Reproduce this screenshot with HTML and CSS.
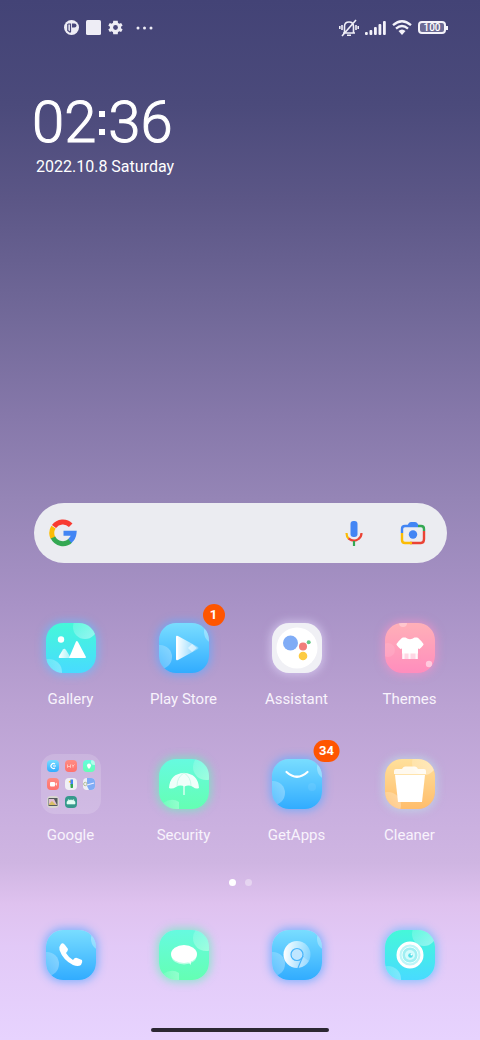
FILE: index.html
```html
<!DOCTYPE html>
<html lang="en">
<head>
<meta charset="utf-8">
<meta name="viewport" content="width=device-width, initial-scale=1">
<title>Home screen</title>
<link rel="stylesheet" href="styles.css">
</head>
<body>
<svg class="defs" aria-hidden="true">
  <defs>
    <linearGradient id="fade" x1="0" x2="1" y1="0" y2="0"><stop offset="0" stop-color="#fff"/><stop offset="1" stop-color="#fff" stop-opacity=".25"/></linearGradient>
    <linearGradient id="bubble" x1="0" x2="1" y1="0" y2="1"><stop offset="0" stop-color="#fff" stop-opacity=".1"/><stop offset="1" stop-color="#fff" stop-opacity=".45"/></linearGradient>
    <linearGradient id="bubbleUp" x1="0" x2="1" y1="0" y2="0"><stop offset="0" stop-color="#fff" stop-opacity=".1"/><stop offset="1" stop-color="#fff" stop-opacity=".3"/></linearGradient>
    <linearGradient id="peak" x1="0" x2="1" y1="0" y2="0"><stop offset="0" stop-color="#fff"/><stop offset="1" stop-color="#fff" stop-opacity=".5"/></linearGradient>
    <symbol id="bg-blue" viewBox="0 0 50 50"><circle cx="1" cy="34" r="12" fill="url(#bubbleUp)"/><circle cx="57" cy="9" r="12" fill="#fff" opacity=".3"/></symbol>
    <symbol id="bg-cyan" viewBox="0 0 50 50"><circle cx="39" cy="4" r="12" fill="url(#bubble)"/><circle cx="3" cy="49" r="13" fill="url(#bubbleUp)"/></symbol>
    <symbol id="bg-green" viewBox="0 0 50 50"><circle cx="47" cy="8" r="13" fill="url(#bubble)"/><path d="M4 44Q13 38 20 43V50H4z" fill="url(#bubbleUp)"/></symbol>
  </defs>
</svg>

<header class="status">
  <div class="status-group">
    <svg width="15" height="15" viewBox="0 0 15 15"><circle cx="7.500" cy="7.500" r="7.500" fill="#eeedf5"/><path d="M3.800 4H6.500V12" fill="none" stroke="#48477b" stroke-width="1.200"/><path d="M3.800 4V10.500L6.500 12.500" fill="none" stroke="#48477b" stroke-width="1.200"/><path d="M8 3.500H10.500A2 2 0 0 1 10.500 7.500H8z" fill="#48477b"/></svg>
    <svg width="15" height="15" viewBox="0 0 15 15"><rect width="15" height="15" rx="1.500" fill="#eeedf5"/></svg>
    <svg width="15" height="15" viewBox="2 2 20 20"><path fill="#eeedf5" d="M19.400 13a7.500 7.500 0 0 0 0-2l2.100-1.600-2-3.500-2.500 1a7.500 7.500 0 0 0-1.700-1L15 3h-6l-.4 2.900a7.500 7.500 0 0 0-1.700 1l-2.500-1-2 3.500L4.600 11a7.500 7.500 0 0 0 0 2l-2.200 1.600 2 3.500 2.500-1a7.500 7.500 0 0 0 1.700 1L9 21h6l.3-2.900a7.500 7.500 0 0 0 1.700-1l2.500 1 2-3.500z"/><circle cx="12" cy="12" r="3.200" fill="#48477b"/></svg>
    <svg class="more" width="17" height="4" viewBox="0 0 17 4" fill="#eeedf5"><circle cx="2" cy="2" r="1.500"/><circle cx="8.500" cy="2" r="1.500"/><circle cx="15" cy="2" r="1.500"/></svg>
  </div>
  <div class="status-group status-right">
    <svg width="20" height="18" viewBox="0 0 20 18" fill="none" stroke="#f0eff7" stroke-width="1.600"><path d="M4 14H16M5.500 13.500V7.500Q5.500 3 10 3T14.500 7.500V13.500M8 16.200H12M3 17L17 1M3 6V11M.8 7V10M17 6V11M19.200 7V10"/></svg>
    <svg width="21" height="14" viewBox="0 0 21 14" fill="#f4f3fa"><rect y="11" width="2.800" height="3" rx="1"/><rect x="4.500" y="9" width="2.800" height="5" rx="1"/><rect x="9" y="6" width="2.800" height="8" rx="1"/><rect x="13.500" y="3" width="2.800" height="11" rx="1"/><rect x="18" width="2.800" height="14" rx="1"/></svg>
    <svg width="20" height="15" viewBox="0 0 20 15" fill="none" stroke="#f4f3fa" stroke-width="2.300"><path d="M1 5.200Q10-2.600 19 5.200M4 8.700Q10 3.300 16 8.700"/><path d="M6.500 11Q10 7.800 13.500 11L10 15z" fill="#f4f3fa" stroke="none"/></svg>
    <div class="battery"><span>100</span></div>
  </div>
</header>

<main class="home">
  <section class="clock">
    <time class="time" datetime="02:36">02<span class="colon"></span>36</time>
    <p class="date">2022.10.8 Saturday</p>
  </section>

  <form class="search">
    <svg width="28" height="28" viewBox="0 0 28 28" fill="none" stroke-width="5"><path d="M5 7.500A11 11 0 0 1 21.700 6.200" stroke="#f83b32"/><path d="M4 19A11 11 0 0 1 4.500 8.200" stroke="#fbbc05"/><path d="M21.500 21.600A11 11 0 0 1 4 18.500" stroke="#34a853"/><path d="M14.500 14.300H25A11 11 0 0 1 20.800 22" stroke="#4285f4"/></svg>
    <input type="search" aria-label="Search">
    <button type="button" aria-label="Voice search"><svg width="18" height="26" viewBox="0 0 18 26" fill="none" stroke-width="2.200"><rect x="5.500" y="1" width="7" height="16" rx="3" fill="#4285f4"/><path d="M1.500 13Q1.500 16.500 3.700 18.800" stroke="#fbbc05"/><path d="M3.500 18.500Q9 22.500 13.500 19Q16.500 17 16.500 13" stroke="#ea4335"/><path d="M9 21V26" stroke="#34a853"/></svg></button>
    <button type="button" aria-label="Search with camera"><svg width="26" height="24" viewBox="0 0 26 24" fill="none" stroke-width="2.400"><path d="M2 12V8Q2 5 5 5H18" stroke="#4285f4"/><path d="M6 5Q8 4.500 8.500 2.500Q9 1 11 1H15Q17 1 17.500 2.500Q18 4 20 5z" fill="#4285f4"/><path d="M18 5H21Q24 5 24 8V10" stroke="#34a853"/><path d="M24 10V18Q24 22 21 22H10" stroke="#ea4335"/><path d="M2 12V19Q2 22 5 22H12" stroke="#fbbc05"/><circle cx="13" cy="13.500" r="4.200" fill="#4285f4"/></svg></button>
  </form>

  <nav class="apps" aria-label="Apps">
    <button class="app"><span class="slot"><span class="tile cyan"><svg viewBox="0 0 50 50"><use href="#bg-cyan"/><circle cx="15" cy="16.500" r="3.200" fill="#fff"/><path d="M23 35L30 18.500Q31 17.500 32 19L40 34Q40 35 39 35z" fill="#fff"/><path d="M13.500 35Q12 35 13 33L17 26.500Q18.500 25 20 27L25 35z" fill="url(#peak)"/></svg></span></span><span class="label">Gallery</span></button>
    <button class="app"><span class="slot"><span class="tile blue"><svg viewBox="0 0 50 50"><use href="#bg-blue"/><path d="M17 14Q17 12 19 13L39 24Q40 25 39 26L19 37Q17 38 17 36z" fill="url(#fade)"/><path d="M17 14V36L19 36V13z" fill="#fff"/><path d="M29 25L33 21L38 25L33 29z" fill="#fff" opacity=".55"/></svg></span><span class="badge">1</span></span><span class="label">Play Store</span></button>
    <button class="app"><span class="slot"><span class="tile white"><svg viewBox="0 0 50 50"><circle cx="25" cy="25" r="20.500" fill="#fff"/><circle cx="18.500" cy="20" r="7.500" fill="#80acf6"/><circle cx="31" cy="23.500" r="4" fill="#f17e7a"/><circle cx="31" cy="33" r="4.300" fill="#fdcb43"/><circle cx="36.700" cy="19.300" r="2" fill="#67c889"/></svg></span></span><span class="label">Assistant</span></button>
    <button class="app"><span class="slot"><span class="tile pink"><svg viewBox="0 0 50 50"><circle cx="18" cy="0" r="4" fill="#fff" opacity=".3"/><circle cx="3" cy="27" r="7" fill="#fff" opacity=".1"/><circle cx="44" cy="41" r="3.200" fill="#fff" opacity=".5"/><path d="M18 14.500H20.500Q25 18 29.500 14.500H32Q34 15 38.500 21Q39 22 34.500 26L33 25.500V30.500H17V25.500L15.500 26Q11 22 11.500 21Q16 15 18 14.500z" fill="#fff"/><path d="M17 29.500H33V36H17z" fill="#fff" opacity=".6"/><path d="M18.500 30V36M24.500 30V36M31.500 30V36" stroke="#fff" stroke-width="2" opacity=".8"/></svg></span></span><span class="label">Themes</span></button>

    <button class="app"><span class="slot folder">
      <svg class="mini blue" viewBox="0 0 12 12"><path d="M8 4A2.500 2.500 0 1 0 8 8M6 6H9" fill="none" stroke="#fff" stroke-width="1.200"/></svg>
      <svg class="mini red" viewBox="0 0 12 12"><path d="M2.500 4.500V7.500L4 6L5.500 7.500V4.500M7 4.500L8 6L9.500 4.500M8 6V7.500" fill="none" stroke="#ffd5cd" stroke-width=".8"/></svg>
      <svg class="mini green" viewBox="0 0 12 12"><path d="M4 5.500A2 2 0 0 1 8 5.500Q8 7 6 9Q4 7 4 5.500" fill="#fff"/><circle cx="11" cy="2" r="3" fill="#fff" opacity=".5"/></svg>
      <svg class="mini red" viewBox="0 0 12 12"><rect x="3" y="4" width="5" height="4.500" rx="1" fill="#fff"/><path d="M8 6L10 4.500V8z" fill="#ffe0da"/></svg>
      <svg class="mini white" viewBox="0 0 12 12"><path d="M3.500 4L6 2V5z" fill="#fbbc05"/><path d="M5.500 1.500H8V7H5.500z" fill="#4285f4"/><path d="M5.500 6H8V9.500Q7 10.500 5.500 9.500z" fill="#34a853"/></svg>
      <svg class="mini white" viewBox="0 0 12 12"><path d="M4 0H12V12H6L4 8z" fill="#7facf5"/><circle cx="2.300" cy="6" r="1.700" fill="none" stroke="#b4bf9c"/><path d="M4 7L11 5" stroke="#eef" stroke-width="1.200"/></svg>
      <svg class="mini silver" viewBox="0 0 12 12"><rect x="1.500" y="2" width="9" height="8" fill="#555b5d"/><path d="M2 3H7L10 9H2z" fill="#e1bed4"/><path d="M2 8L5 5L9 9H2z" fill="#d8bf65"/></svg>
      <svg class="mini teal" viewBox="0 0 12 12"><path d="M2 6Q2 4 6 4T10 6V8H2zM3 3L4.500 5M9 3L7.500 5" fill="#e0fff4" stroke="#e0fff4" stroke-width=".6"/></svg>
    </span><span class="label">Google</span></button>
    <button class="app"><span class="slot"><span class="tile green"><svg viewBox="0 0 50 50"><use href="#bg-green"/><path d="M10 29Q11 14.500 25 14Q39 14.500 40 29Q37 30.500 34 28Q30 25.500 25.500 27.500Q21 25.500 17 28Q13 30.500 10 29z" fill="#fff" opacity=".9"/><path d="M18 27Q18 18 25 14Q32 18 32 27" fill="none" stroke="#c9f9ea" stroke-width="1"/><path d="M25 27V36" stroke="#fff" stroke-width="1.400" opacity=".8"/></svg></span></span><span class="label">Security</span></button>
    <button class="app"><span class="slot"><span class="tile blue"><svg viewBox="0 0 50 50"><use href="#bg-blue"/><circle cx="40" cy="28" r="4" fill="#fff" opacity=".08"/><path d="M14.500 13Q25 22.500 35.500 13" fill="none" stroke="#fff" stroke-width="2.200" stroke-linecap="round"/></svg></span><span class="badge">34</span></span><span class="label">GetApps</span></button>
    <button class="app"><span class="slot"><span class="tile gold"><svg viewBox="0 0 50 50"><circle cx="39" cy="4" r="12" fill="url(#bubble)"/><circle cx="3" cy="46" r="13" fill="url(#bubbleUp)"/><path d="M10 16H40L37 43H13z" fill="#fff"/><path d="M9 15V12Q9 10 11 10H17Q18 7.500 20 7.500H30Q32 7.500 33 10H39Q41 10 41 12V15z" fill="#fff" opacity=".85"/><path d="M10 15.500H40" stroke="#ffe4ad" stroke-width="1"/></svg></span></span><span class="label">Cleaner</span></button>
  </nav>

  <div class="pages" aria-label="Page 1 of 2"><span class="dot current"></span><span class="dot"></span></div>

  <nav class="apps" aria-label="Dock">
    <button class="app" aria-label="Phone"><span class="slot"><span class="tile blue"><svg viewBox="0 0 50 50"><use href="#bg-blue"/><path d="M15 14Q17 12 19 15L22 19Q22 21 20 23Q23 28 27 30Q29 27 31 28L36 30Q37 32 35 35Q32 37 27 35Q17 30 13.500 20Q13 16 15 14z" fill="#fff"/></svg></span></span></button>
    <button class="app" aria-label="Messages"><span class="slot"><span class="tile green"><svg viewBox="0 0 50 50"><use href="#bg-green"/><ellipse cx="25" cy="26" rx="12.500" ry="8.500" fill="#fff" opacity=".55"/><path d="M29 32L32 35V31z" fill="#fff" opacity=".7"/><ellipse cx="25" cy="24" rx="13" ry="9" fill="#fff"/></svg></span></span></button>
    <button class="app" aria-label="Browser"><span class="slot"><span class="tile blue"><svg viewBox="0 0 50 50"><use href="#bg-blue"/><circle cx="25" cy="24.500" r="13.500" fill="url(#fade)"/><circle cx="25" cy="24.500" r="6" fill="#bfe6ff" stroke="#48b5fb" stroke-width="1.200"/><path d="M31 26L26 38" stroke="#48b5fb" stroke-width="1.200"/><path d="M31 27L27 37Q34 37 37 31z" fill="#fff" opacity=".2"/></svg></span></span></button>
    <button class="app" aria-label="Camera"><span class="slot"><span class="tile cyan"><svg viewBox="0 0 50 50"><use href="#bg-cyan"/><circle cx="25" cy="25" r="12" fill="#bdf5f7" stroke="#fff" stroke-width="3"/><circle cx="25" cy="25" r="8" fill="#a0eff2" stroke="#e8ffff" stroke-width="1"/><circle cx="25" cy="25" r="5" fill="#d4fbfc"/><circle cx="25.500" cy="25.500" r="2.300" fill="#55dfe9"/><circle cx="26.500" cy="24.500" r="1" fill="#fff"/></svg></span></span></button>
  </nav>
</main>
<div class="home-bar"></div>
</body>
</html>
```
FILE: styles.css
```css
* { box-sizing: border-box; }

body {
  margin: 0;
  min-height: 100vh;
  display: flex;
  flex-direction: column;
  padding-bottom: 8px;
  font-family: Roboto, "Liberation Sans", sans-serif;
  color: #fff;
  background: linear-gradient(#434376 0%, #4b4a7b 10%, #5b5686 19%, #736a9a 31%, #8678aa 40%, #9585b6 48%, #a892c6 58%, #bba2d3 68%, #c9afdf 78%, #cfb5e2 83%, #dfc2ef 87%, #e2c9f7 91%, #e7d3fe 100%);
}

button { border: 0; padding: 0; background: none; color: inherit; font: inherit; }
svg { display: block; flex: none; }
.defs { position: absolute; width: 0; height: 0; }

.status {
  height: 55px;
  padding: 0 31px 0 64px;
  display: flex;
  align-items: center;
  justify-content: space-between;
}
.status-group { display: flex; align-items: center; gap: 7px; }
.status-right { gap: 6px; }
.more { margin-left: 6px; }
.battery {
  position: relative;
  width: 28px;
  height: 13px;
  margin-right: 3px;
  border: 2px solid #f4f3fa;
  border-radius: 4px;
  background: #6b6a94;
  font-size: 10px;
  font-weight: 500;
  line-height: 9px;
  text-align: center;
}
.battery::after {
  content: "";
  position: absolute;
  right: -4px;
  top: 3px;
  width: 2px;
  height: 4px;
  background: #f4f3fa;
}

.home { flex: 1; display: flex; flex-direction: column; }

.clock { padding: 37px 32px 0; margin-bottom: auto; }
.time {
  display: flex;
  align-items: center;
  font-size: 58px;
  font-weight: 300;
  line-height: 61px;
  -webkit-text-stroke: 1px #fff;
}
.colon {
  width: 6px;
  height: 24px;
  margin: 0 3px;
  border: solid #fff;
  border-width: 6px 0;
}
.date { margin: 4px 4px 0; font-size: 16px; line-height: 20px; }

.search {
  height: 60px;
  margin: 0 33px 55px 34px;
  padding: 0 21px 0 15px;
  display: flex;
  align-items: center;
  border-radius: 30px;
  background: #ebecf1;
}
.search input {
  flex: 1;
  min-width: 0;
  height: 40px;
  padding: 0 12px;
  border: 0;
  outline: 0;
  background: none;
  font: inherit;
}
.search button + button { margin-left: 37px; }

.apps {
  display: grid;
  grid-template-columns: repeat(4, 1fr);
  row-gap: 45px;
  padding: 0 14px;
}
.app { display: flex; flex-direction: column; align-items: center; gap: 11px; }
.slot {
  position: relative;
  width: 60px;
  height: 60px;
  display: grid;
  place-items: center;
}
.label { font-size: 15px; line-height: 20px; color: #f8f3fc; }

.tile {
  width: 50px;
  height: 50px;
  overflow: hidden;
  border-radius: 17px;
}
.blue { background: linear-gradient(#79ddff, #31acff); }
.cyan { background: linear-gradient(#45f8d9, #48dbff); }
.green { background: linear-gradient(#66fae0, #64ffb3); }
.white { background: #f0f0f5; }
.pink { background: linear-gradient(#ffb0b8, #ff8dbd); }
.gold { background: linear-gradient(#ffe09b, #ffbd6c); }
.red { background: linear-gradient(#ff8c83, #ff716d); }
.silver { background: #d9d6d2; }
.teal { background: #36998c; }
.tile.blue { box-shadow: 0 0 8px 2px #61aaffc0; }
.tile.cyan { box-shadow: 0 0 8px 2px #61bdffb0; }
.tile.green { box-shadow: 0 0 8px 2px #68efbdb0; }
.tile.white { box-shadow: 0 0 8px 2px #e7ddff90; }
.tile.pink { box-shadow: 0 0 8px 2px #ff91c890; }
.tile.gold { box-shadow: 0 0 8px 2px #bce3e9a0; }

.badge {
  position: absolute;
  left: 60px;
  top: -14px;
  transform: translateX(-50%);
  min-width: 22px;
  height: 22px;
  padding: 0 6px;
  border-radius: 11px;
  background: #ff5500;
  font-size: 13px;
  font-weight: 700;
  line-height: 22px;
  text-align: center;
}

.folder {
  grid-template-columns: repeat(3, 12px);
  grid-template-rows: repeat(3, 12px);
  place-content: center;
  gap: 6px;
  border-radius: 14px;
  background: #ffffff28;
}
.mini { width: 12px; height: 12px; border-radius: 4px; }

.pages {
  display: flex;
  justify-content: center;
  gap: 9px;
  padding: 34px 0 39px;
}
.dot { width: 7px; height: 7px; border-radius: 50%; background: #ffffff60; }
.dot.current { background: #fff; }

.home-bar {
  width: 37%;
  height: 4px;
  margin: 43px auto 0;
  border-radius: 2px;
  background: #2c2733;
}
```
